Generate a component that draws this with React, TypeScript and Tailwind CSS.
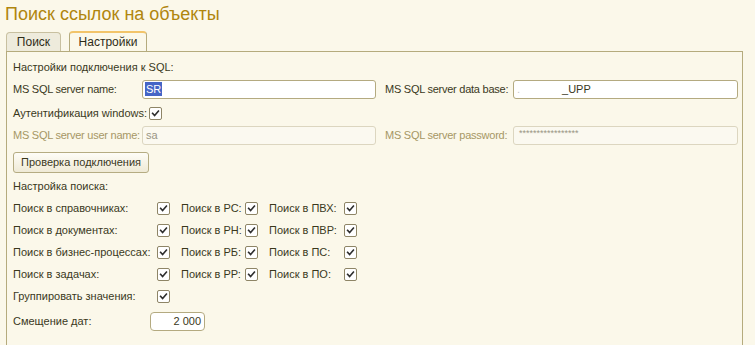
import React from "react";

const FONT = { fontFamily: '"Liberation Sans", Arial, sans-serif' };

function Check() {
  return (
    <div className="w-[13px] h-[13px] shrink-0 rounded-[2px] border border-[#8E8566] bg-white flex items-center justify-center">
      <svg width="11" height="11" viewBox="0 0 11 11">
        <path d="M2.6 5.4 L4.6 7.6 L8.4 3.2" fill="none" stroke="#2E2E2E" strokeWidth="1.6" strokeLinecap="square" />
      </svg>
    </div>
  );
}

function Row({ children, className = "" }: { children: React.ReactNode; className?: string }) {
  return <div className={`h-[22px] flex items-center whitespace-nowrap ${className}`}>{children}</div>;
}

function SearchRow({ a, b, c }: { a: string; b: string; c: string }) {
  return (
    <Row>
      <span className="w-[144px] shrink-0">{a}</span>
      <Check />
      <span className="w-[75px] shrink-0 pl-[11px]">{b}</span>
      <Check />
      <span className="w-[86px] shrink-0 pl-[11px]">{c}</span>
      <Check />
    </Row>
  );
}

export default function App() {
  return (
    <div className="w-[755px] h-[345px] overflow-hidden bg-[#FBF8EA] text-[#3A381C] text-[11px]" style={FONT}>
      <div className="h-[31px] pl-[5px] pt-[2px] text-[18px] leading-[24px] text-[#B0860E] whitespace-nowrap">Поиск ссылок на объекты</div>
      <div className="flex items-end h-[20px] pl-[6px] text-[12px]">
        <div className="w-[55px] h-[19px] flex items-center justify-center rounded-t-[4px] border border-b-0 border-[#C8C0A0] bg-[#EEEBDC] text-[#2E2C18]">
          Поиск
        </div>
        <div className="ml-[8px] w-[78px] h-[20px] flex items-center justify-center rounded-t-[4px] border border-b-0 border-[#B5AB7D] border-t-[2px] border-t-[#F2C46A] bg-[#FBF8EA] text-[#2E2C18]">
          Настройки
        </div>
      </div>
      <div className="ml-[6px] w-[737px] h-[400px] border border-b-0 border-[#B5AB7D] pl-[6px] pt-[4px]">
        <Row>Настройки подключения к SQL:</Row>
        <Row>
          <span className="w-[129px] shrink-0 tracking-[-0.25px]">MS SQL server name:</span>
          <div className="w-[234px] h-[19px] shrink-0 rounded-[3px] border border-[#B4AA80] bg-white flex items-center pl-[2px]">
            <span className="bg-[#4565C6] text-white px-[1px] leading-[14px]">SR</span>
          </div>
          <span className="w-[137px] shrink-0 pl-[9px] tracking-[-0.25px]">MS SQL server data base:</span>
          <div className="w-[225px] h-[19px] shrink-0 rounded-[3px] border border-[#B4AA80] bg-white flex items-center pl-[3px]">
            <span className="text-[#C8C8C8]">.</span>
            <span className="ml-[42px]">_UPP</span>
          </div>
        </Row>
        <Row className="mt-[2px]">
          <span className="w-[136px] shrink-0">Аутентификация windows:</span>
          <Check />
        </Row>
        <Row>
          <span className="w-[129px] shrink-0 text-[#A69765] tracking-[-0.25px]">MS SQL server user name:</span>
          <div className="w-[234px] h-[19px] shrink-0 rounded-[3px] border border-[#DCD6C0] bg-[#FBF9F0] flex items-center pl-[3px] text-[#9A9684]">
            sa
          </div>
          <span className="w-[137px] shrink-0 pl-[9px] text-[#A69765] tracking-[-0.25px]">MS SQL server password:</span>
          <div className="w-[225px] h-[19px] shrink-0 rounded-[3px] border border-[#DCD6C0] bg-[#FBF9F0] flex items-start pl-[5px] pt-[1px] text-[9px] leading-[10px] text-[#9A9684]">
            *****************
          </div>
        </Row>
        <button className="mt-[6px] w-[136px] h-[21px] rounded-[3px] border border-[#B5AC82] bg-gradient-to-b from-[#FEFDF7] to-[#EFEAD6] text-[#3A381C] text-[11px] flex items-center justify-center whitespace-nowrap">
          Проверка подключения
        </button>
        <Row className="mt-[2px]">Настройка поиска:</Row>
        <SearchRow a="Поиск в справочниках:" b="Поиск в РС:" c="Поиск в ПВХ:" />
        <SearchRow a="Поиск в документах:" b="Поиск в РН:" c="Поиск в ПВР:" />
        <SearchRow a="Поиск в бизнес-процессах:" b="Поиск в РБ:" c="Поиск в ПС:" />
        <SearchRow a="Поиск в задачах:" b="Поиск в РР:" c="Поиск в ПО:" />
        <Row>
          <span className="w-[144px] shrink-0">Группировать значения:</span>
          <Check />
        </Row>
        <Row className="mt-[3px]">
          <span className="w-[137px] shrink-0">Смещение дат:</span>
          <div className="w-[55px] h-[19px] rounded-[4px] border border-[#B4AA80] bg-white flex items-center justify-end pr-[3px]">
            2 000
          </div>
        </Row>
      </div>
    </div>
  );
}
